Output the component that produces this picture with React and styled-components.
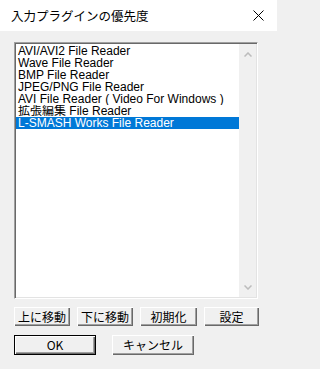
import React from 'react'
import styled, { createGlobalStyle } from 'styled-components'

const GlobalStyle = createGlobalStyle`
  html, body {
    margin: 0;
    padding: 0;
    background: #f0f0f0;
  }
  body {
    font-family: "Liberation Sans", "Noto Sans CJK JP", sans-serif;
  }
`

const Window = styled.div`
  width: 277px;
  height: 369px;
  background: #f0f0f0;
  display: flex;
  flex-direction: column;
  overflow: hidden;
`

const TitleBar = styled.div`
  height: 31px;
  background: #ffffff;
  display: flex;
  align-items: center;
  justify-content: space-between;
  padding: 0 13px 0 11px;
  font-family: "Noto Sans CJK JP", sans-serif;
  font-size: 12.5px;
  color: #000;
`

const Content = styled.div`
  padding: 11px 0 0 14px;
  display: flex;
  flex-direction: column;
`

const ListBox = styled.div`
  width: 240px;
  height: 253px;
  display: flex;
  background: #ffffff;
  border-top: 1px solid #a0a0a0;
  border-left: 1px solid #a0a0a0;
  border-right: 1px solid #ffffff;
  border-bottom: 1px solid #ffffff;
  box-shadow: inset 1px 1px 0 #696969, inset -1px -1px 0 #e3e3e3;
  padding: 1px;
`

const Items = styled.div`
  flex: 1;
  display: flex;
  flex-direction: column;
  padding-top: 1px;
`

const Item = styled.div`
  height: 12px;
  line-height: 12px;
  font-size: 12px;
  padding-left: 2px;
  white-space: nowrap;
  overflow: hidden;
  color: ${p => (p.selected ? '#ffffff' : '#000000')};
  background: ${p => (p.selected ? '#0078d7' : 'transparent')};
`

const ScrollBar = styled.div`
  width: 17px;
  background: #f0f0f0;
  display: flex;
  flex-direction: column;
  justify-content: space-between;
  align-items: center;
  padding: 8px 0 7px;
`

const ButtonRow = styled.div`
  display: flex;
  gap: ${p => p.gap}px;
  margin-top: ${p => p.top}px;
`

const Button = styled.button`
  box-sizing: border-box;
  width: ${p => p.w}px;
  height: ${p => p.h || 19}px;
  padding: 0;
  margin: 0;
  background: #f0f0f0;
  font-family: "Noto Sans CJK JP", sans-serif;
  font-size: 12px;
  line-height: 1;
  color: #000;
  border: ${p => (p.primary ? '1px solid #000' : 'none')};
  box-shadow: inset 1px 1px 0 #ffffff, inset -1px -1px 0 #696969, inset -2px -2px 0 #a0a0a0;
  display: flex;
  align-items: center;
  justify-content: center;
`

const Chevron = ({ down }) => (
  <svg width="8" height="5" viewBox="0 0 8 5">
    <path
      d={down ? 'M0.5 0.5 L4 4 L7.5 0.5' : 'M0.5 4.5 L4 1 L7.5 4.5'}
      fill="none"
      stroke="#bcbcbc"
      strokeWidth="1.5"
    />
  </svg>
)

const items = [
  'AVI/AVI2 File Reader',
  'Wave File Reader',
  'BMP File Reader',
  'JPEG/PNG File Reader',
  'AVI File Reader ( Video For Windows )',
  '拡張編集 File Reader',
  'L-SMASH Works File Reader',
]

export default function App() {
  return (
    <Window>
      <GlobalStyle />
      <TitleBar>
        <span>入力プラグインの優先度</span>
        <svg width="11" height="11" viewBox="0 0 11 11">
          <path d="M0.5 0.5 L10.5 10.5 M10.5 0.5 L0.5 10.5" stroke="#000" strokeWidth="1" />
        </svg>
      </TitleBar>
      <Content>
        <ListBox>
          <Items>
            {items.map((t, i) => (
              <Item key={t} selected={i === items.length - 1}>{t}</Item>
            ))}
          </Items>
          <ScrollBar>
            <Chevron />
            <Chevron down />
          </ScrollBar>
        </ListBox>
        <ButtonRow gap={7} top={8}>
          <Button w={56}>上に移動</Button>
          <Button w={56}>下に移動</Button>
          <Button w={57}>初期化</Button>
          <Button w={55}>設定</Button>
        </ButtonRow>
        <ButtonRow gap={16} top={9}>
          <Button w={82} h={20} primary>OK</Button>
          <Button w={82} h={20}>キャンセル</Button>
        </ButtonRow>
      </Content>
    </Window>
  )
}
